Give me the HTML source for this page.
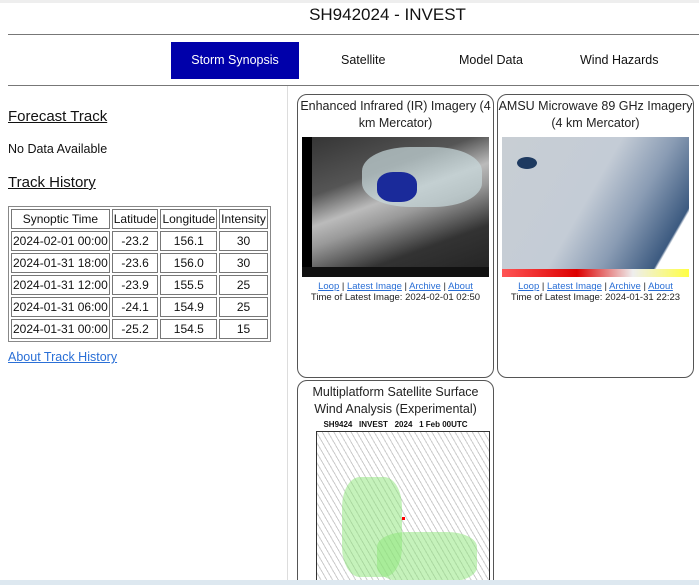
<!DOCTYPE html>
<html style="overflow:hidden;height:585px"><head><style>
body{margin:0;width:699px;height:585px;overflow:hidden;background:#fff;font-family:"Liberation Sans","DejaVu Sans",sans-serif;color:#111;position:relative}
.a{position:absolute}
.card{position:absolute;border:1px solid #555;border-radius:10px;background:#fff}
.ct{text-align:center;font-size:12.5px;line-height:17px;color:#222;margin-top:3px}
.lk{font-size:9.5px;text-align:center;color:#222;line-height:11px}
.lk a{color:#2a6fd6;text-decoration:underline}
table{border-collapse:separate;border-spacing:2px;border:1px solid #888;font-size:12px}
td{border:1px solid #777;padding:0 1px;height:18px;text-align:center}
</style></head><body>
<div class="a" style="left:0;top:0;width:699px;height:3px;background:#eee"></div>
<div class="a" style="left:0;top:5px;width:775px;text-align:center;font-size:17px;color:#111">SH942024 - INVEST</div>
<div class="a" style="left:8px;top:34px;width:691px;height:1px;background:#777"></div>
<div class="a" style="left:171px;top:42px;width:128px;height:37px;background:#0000aa;color:#fff;font-size:12.5px;line-height:37px;text-align:center">Storm Synopsis</div>
<div class="a" style="left:341px;top:53px;font-size:12.5px">Satellite</div>
<div class="a" style="left:459px;top:53px;font-size:12.5px">Model Data</div>
<div class="a" style="left:580px;top:53px;font-size:12.5px">Wind Hazards</div>
<div class="a" style="left:8px;top:85px;width:691px;height:1px;background:#777"></div>
<div class="a" style="left:287px;top:86px;width:1px;height:499px;background:#ddd"></div>
<div class="a" style="left:8px;top:108px;font-size:15px;text-decoration:underline">Forecast Track</div>
<div class="a" style="left:8px;top:142px;font-size:12.5px">No Data Available</div>
<div class="a" style="left:8px;top:174px;font-size:15px;text-decoration:underline">Track History</div>
<table class="a" style="left:8px;top:206px">
<tr><td>Synoptic Time</td><td>Latitude</td><td>Longitude</td><td>Intensity</td></tr>
<tr><td>2024-02-01 00:00</td><td>-23.2</td><td>156.1</td><td>30</td></tr>
<tr><td>2024-01-31 18:00</td><td>-23.6</td><td>156.0</td><td>30</td></tr>
<tr><td>2024-01-31 12:00</td><td>-23.9</td><td>155.5</td><td>25</td></tr>
<tr><td>2024-01-31 06:00</td><td>-24.1</td><td>154.9</td><td>25</td></tr>
<tr><td>2024-01-31 00:00</td><td>-25.2</td><td>154.5</td><td>15</td></tr>
</table>
<div class="a" style="left:8px;top:350px;font-size:12.5px;color:#2a6fd6;text-decoration:underline">About Track History</div>

<div class="card" style="left:297px;top:94px;width:195px;height:282px">
<div class="ct">Enhanced Infrared (IR) Imagery (4 km Mercator)</div>
<div style="margin:5px 0 0 4px;width:187px;height:140px;background:linear-gradient(160deg,#333 0%,#555 30%,#bbb 45%,#999 55%,#333 75%,#222 100%);position:relative;overflow:hidden">
<div class="a" style="left:60px;top:10px;width:120px;height:60px;background:#c8d8dc;border-radius:40%;opacity:.7"></div>
<div class="a" style="left:75px;top:35px;width:40px;height:30px;background:#1a2a9a;border-radius:40%"></div>
<div class="a" style="left:0;top:0;width:10px;height:140px;background:#000"></div>
<div class="a" style="left:0;top:130px;width:187px;height:10px;background:#111"></div>
</div>
<div class="lk" style="margin-top:4px"><a>Loop</a> | <a>Latest Image</a> | <a>Archive</a> | <a>About</a></div>
<div class="lk">Time of Latest Image: 2024-02-01 02:50</div>
</div>

<div class="card" style="left:497px;top:94px;width:195px;height:282px">
<div class="ct">AMSU Microwave 89 GHz Imagery (4 km Mercator)</div>
<div style="margin:5px 0 0 4px;width:187px;height:140px;background:linear-gradient(120deg,#c8ced4 0%,#c4ccd6 45%,#8a9cb4 65%,#3c5a80 85%,#fff 86%);position:relative">
<div class="a" style="left:15px;top:20px;width:20px;height:12px;background:#1e3a60;border-radius:50%"></div>
<div class="a" style="left:0;top:132px;width:187px;height:8px;background:linear-gradient(90deg,#f55,#d00 40%,#eee 70%,#ff4)"></div>
</div>
<div class="lk" style="margin-top:4px"><a>Loop</a> | <a>Latest Image</a> | <a>Archive</a> | <a>About</a></div>
<div class="lk">Time of Latest Image: 2024-01-31 22:23</div>
</div>

<div class="card" style="left:297px;top:380px;width:195px;height:230px">
<div class="ct">Multiplatform Satellite Surface Wind Analysis (Experimental)</div>
<div style="font-size:8px;font-weight:bold;text-align:center;margin-top:2px">SH9424 &nbsp; INVEST &nbsp; 2024 &nbsp; 1 Feb 00UTC</div>
<div style="margin:2px 0 0 18px;width:172px;height:160px;border:1px solid #333;background:repeating-linear-gradient(60deg,#fff 0 4px,#ccc 4px 5px);position:relative">
<div class="a" style="left:25px;top:45px;width:60px;height:100px;background:rgba(140,230,120,.5);border-radius:30%"></div>
<div class="a" style="left:60px;top:100px;width:100px;height:50px;background:rgba(140,230,120,.5);border-radius:30%"></div>
<div class="a" style="left:85px;top:85px;width:3px;height:3px;background:red"></div>
</div>
</div>
<div class="a" style="left:0;top:580px;width:699px;height:5px;background:#dde8f0"></div>
</body></html>
